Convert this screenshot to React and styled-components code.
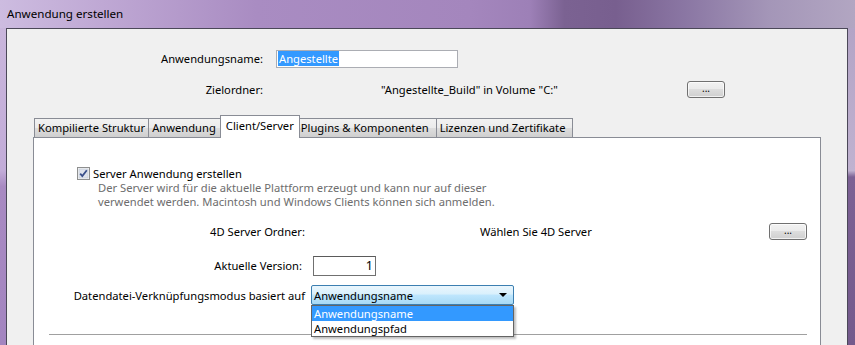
import React from "react";
import styled, { createGlobalStyle } from "styled-components";

const Global = createGlobalStyle`
  html, body { margin: 0; padding: 0; overflow: hidden; }
  body { font-family: "Noto Sans", "Open Sans", sans-serif; font-size: 11.2px; color: #000; }
`;

const Win = styled.div`
  width: 855px;
  height: 345px;
  display: flex;
  flex-direction: column;
  overflow: hidden;
`;

const TitleBar = styled.div`
  height: 28px;
  flex: none;
  display: flex;
  align-items: center;
  padding: 0 0 2px 7px;
  box-sizing: border-box;
  background: linear-gradient(90deg, #cdbce0 0%, #bfa8d4 12%, #a98cc2 30%, #a486bd 55%, #9d80b7 62%, #7b6292 66%, #785f8f 72%, #8a76a3 80%, #a496b8 90%, #b2a6c2 100%);
  font-size: 11.6px;
  color: #000;
`;

const Body = styled.div`
  flex: 1;
  display: flex;
  min-height: 0;
`;

const Edge = styled.div`
  flex: none;
  width: ${(p) => p.$w}px;
  background: ${(p) => p.$bg};
`;

const Client = styled.div`
  flex: 1;
  background: #f0f0f0;
  border: 1px solid #4b4858;
  border-bottom: none;
  display: flex;
  flex-direction: column;
  min-width: 0;
`;

const TopForm = styled.div`
  display: flex;
  flex-direction: column;
  padding-top: 21px;
  gap: 14px;
`;

const Row = styled.div`
  display: flex;
  align-items: center;
  height: ${(p) => p.$h || 17}px;
`;

const Label = styled.div`
  flex: none;
  width: ${(p) => p.$w}px;
  margin-right: ${(p) => p.$gap || 0}px;
  text-align: right;
  white-space: nowrap;
`;

const TextInput = styled.div`
  flex: none;
  box-sizing: border-box;
  width: ${(p) => p.$w}px;
  height: ${(p) => p.$h || 18}px;
  background: #fff;
  border: 1px solid ${(p) => p.$dark ? "#707070" : "#abadb3"};
  border-top-color: ${(p) => p.$dark ? "#5a5a5a" : "#abadb3"};
  display: flex;
  align-items: center;
  justify-content: ${(p) => p.$right ? "flex-end" : "flex-start"};
  padding: 0 2px 0 1px;
  white-space: nowrap;
  font-size: ${(p) => p.$fs || 11.2}px;
`;

const Selected = styled.span`
  background: #3399ff;
  color: #fff;
  padding: 0 1px;
  line-height: 15px;
`;

const Value = styled.div`
  flex: none;
  width: ${(p) => p.$w}px;
  margin-left: ${(p) => p.$ml}px;
  white-space: nowrap;
`;

const DotsButton = styled.button`
  flex: none;
  width: 38px;
  height: 17px;
  box-sizing: border-box;
  border: 1px solid #707070;
  border-radius: 3px;
  background: linear-gradient(180deg, #f2f2f2 0%, #ebebeb 45%, #dddddd 50%, #cfcfcf 100%);
  box-shadow: inset 0 0 0 1px rgba(255,255,255,0.7);
  font-family: inherit;
  font-size: 10px;
  line-height: 10px;
  padding: 0 0 4px;
  color: #000;
  margin: 0;
`;

const TabArea = styled.div`
  margin: 18px 0 0 26px;
  width: 788px;
  display: flex;
  flex-direction: column;
  flex: 1;
`;

const TabStrip = styled.div`
  display: flex;
  align-items: flex-end;
  height: 22px;
  padding-left: 1px;
  position: relative;
  z-index: 1;
  margin-bottom: -1px;
`;

const Tab = styled.div`
  box-sizing: border-box;
  height: ${(p) => (p.$active ? 23 : 20)}px;
  padding: 0 ${(p) => (p.$active ? 5 : 3)}px ${(p) => (p.$active ? 3 : 1)}px;
  padding-right: ${(p) => (p.$active ? 5 : 3) + (p.$extra || 0)}px;
  margin-right: ${(p) => (p.$active ? -2 : 0)}px;
  margin-left: ${(p) => (p.$first ? 0 : p.$active ? -2 : -1)}px;
  border: 1px solid #898c95;
  border-bottom: ${(p) => (p.$active ? "none" : "1px solid #898c95")};
  background: ${(p) => p.$active ? "#fff" : "linear-gradient(180deg, #f2f2f2 0%, #ebebeb 50%, #dddddd 51%, #cfcfcf 100%)"};
  display: flex;
  align-items: center;
  white-space: nowrap;
  position: relative;
  z-index: ${(p) => (p.$active ? 2 : 0)};
`;

const Panel = styled.div`
  flex: 1;
  background: #fff;
  border: 1px solid #898c95;
  border-bottom: none;
  display: flex;
  flex-direction: column;
  padding-top: 28px;
`;

const CheckRow = styled.div`
  display: flex;
  align-items: center;
  padding-left: 43px;
  height: 14px;
  gap: 3px;
`;

const Desc = styled.div`
  padding-left: 64px;
  margin-top: 1px;
  color: #6d6d6d;
  line-height: 14px;
`;

const PanelForm = styled.div`
  display: flex;
  flex-direction: column;
  margin-top: 14px;
`;

const PRow = styled.div`
  display: flex;
  align-items: center;
  height: ${(p) => p.$h}px;
  margin-top: ${(p) => p.$mt || 0}px;
  position: relative;
`;

const Combo = styled.div`
  flex: none;
  position: relative;
  width: 203px;
  height: 20px;
  box-sizing: border-box;
  border: 1px solid #3c7fb1;
  border-radius: 2px;
  background: linear-gradient(180deg, #eaf6fd 0%, #d9f0fc 45%, #bee6fd 50%, #a7d9f5 100%);
  display: flex;
  align-items: center;
  padding-left: 2px;
`;

const Arrow = styled.div`
  position: absolute;
  right: 6px;
  top: 7px;
  width: 0;
  height: 0;
  border-left: 4px solid transparent;
  border-right: 4px solid transparent;
  border-top: 4px solid #000;
`;

const DropList = styled.div`
  position: absolute;
  left: -1px;
  top: 19px;
  width: 203px;
  box-sizing: border-box;
  background: #fff;
  border: 1px solid #646464;
  box-shadow: 2px 2px 2px rgba(0,0,0,0.25);
  z-index: 5;
  padding: 0;
`;

const Option = styled.div`
  height: 15px;
  line-height: 15px;
  padding-left: 2px;
  background: ${(p) => (p.$sel ? "#3399ff" : "#fff")};
  color: ${(p) => (p.$sel ? "#fff" : "#000")};
`;

const Separator = styled.div`
  margin: 29px 13px 0 15px;
  height: 1px;
  background: #a0a0a0;
`;

function CheckBox() {
  return (
    <svg width="13" height="13" viewBox="0 0 13 13">
      <rect x="0.5" y="0.5" width="12" height="12" fill="#f4f4f4" stroke="#8e8f8f" />
      <rect x="2" y="2" width="9" height="9" fill="#dfe3ec" stroke="#b9c2d2" strokeWidth="0.5" />
      <path d="M3.2 6.6 L5.3 9 L9.8 3.2" fill="none" stroke="#3a4f8a" strokeWidth="1.8" />
    </svg>
  );
}

export default function App() {
  return (
    <Win>
      <Global />
      <TitleBar>Anwendung erstellen</TitleBar>
      <Body>
        <Edge $w={6} $bg="linear-gradient(180deg, #c9b6dc 0%, #c2acd8 45%, #a88ac2 50%, #a385c0 100%)" />
        <Client>
          <TopForm>
            <Row>
              <Label $w={256} $gap={13}>Anwendungsname:</Label>
              <TextInput $w={182}>
                <Selected>Angestellte</Selected>
              </TextInput>
            </Row>
            <Row>
              <Label $w={256}>Zielordner:</Label>
              <Value $ml={118} $w={306}>"Angestellte_Build" in Volume "C:"</Value>
              <DotsButton>...</DotsButton>
            </Row>
          </TopForm>
          <TabArea>
            <TabStrip>
              <Tab $first>Kompilierte Struktur</Tab>
              <Tab $extra={2}>Anwendung</Tab>
              <Tab $active>Client/Server</Tab>
              <Tab $extra={4}>Plugins &amp; Komponenten</Tab>
              <Tab $extra={4}>Lizenzen und Zertifikate</Tab>
            </TabStrip>
            <Panel>
              <CheckRow>
                <CheckBox />
                <span>Server Anwendung erstellen</span>
              </CheckRow>
              <Desc>
                Der Server wird für die aktuelle Plattform erzeugt und kann nur auf dieser
                <br />
                verwendet werden. Macintosh und Windows Clients können sich anmelden.
              </Desc>
              <PanelForm>
                <PRow $h={17}>
                  <Label $w={271}>4D Server Ordner:</Label>
                  <Value $ml={175} $w={289}>Wählen Sie 4D Server</Value>
                  <DotsButton>...</DotsButton>
                </PRow>
                <PRow $h={19} $mt={16}>
                  <Label $w={268} $gap={11}>Aktuelle Version:</Label>
                  <TextInput $w={63} $h={20} $fs={12.5} $dark $right>1</TextInput>
                </PRow>
                <PRow $h={20} $mt={10}>
                  <Label $w={271} $gap={6}>Datendatei-Verknüpfungsmodus basiert auf</Label>
                  <Combo>
                    Anwendungsname
                    <Arrow />
                    <DropList>
                      <Option $sel>Anwendungsname</Option>
                      <Option>Anwendungspfad</Option>
                    </DropList>
                  </Combo>
                </PRow>
              </PanelForm>
              <Separator />
            </Panel>
          </TabArea>
        </Client>
        <Edge $w={7} $bg="linear-gradient(180deg, #b3a4c6 0%, #c0b2d0 45%, #7c6194 47%, #745a8c 100%)" />
      </Body>
    </Win>
  );
}
